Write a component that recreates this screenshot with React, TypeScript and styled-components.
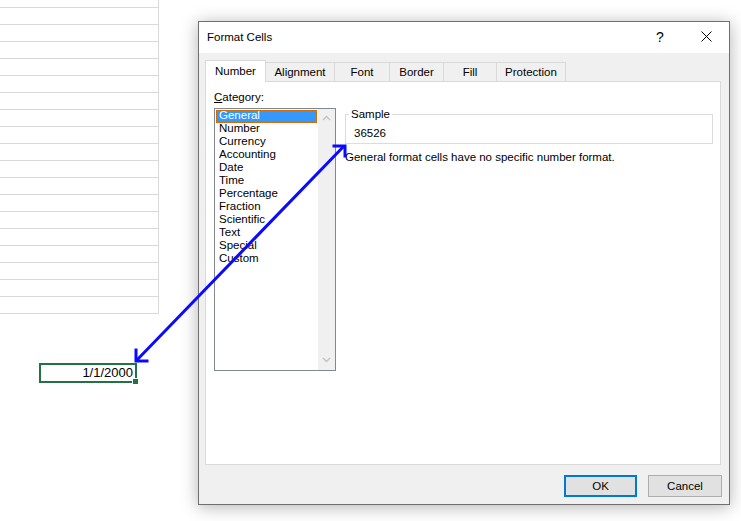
import styled, { createGlobalStyle } from "styled-components";

const GlobalStyle = createGlobalStyle`
    body {
        margin: 0;
        background: #ffffff;
        font-family: "Liberation Sans", Arial, sans-serif;
    }
`;

const Page = styled.div`
    position: relative;
    width: 741px;
    height: 521px;
    overflow: hidden;
    background: #ffffff;
`;

const Sheet = styled.div`
    width: 158px;
    border-right: 1px solid #d9d9d9;
`;

const SheetRow = styled.div<{ $first?: boolean }>`
    height: ${p => (p.$first ? "7px" : "16px")};
    border-bottom: 1px solid #d9d9d9;
`;

const CellRow = styled.div`
    margin-top: 49px;
    padding-left: 39px;
`;

const Cell = styled.div`
    position: relative;
    box-sizing: border-box;
    width: 98px;
    height: 20px;
    border: 2px solid #217346;
    padding-right: 2px;
    padding-bottom: 1px;
    display: flex;
    align-items: center;
    justify-content: flex-end;
    font-size: 13px;
    color: #000;
`;

const Handle = styled.div`
    position: absolute;
    right: -3px;
    bottom: -3px;
    width: 5px;
    height: 5px;
    background: #217346;
    border: 1px solid #ffffff;
    border-right: none;
    border-bottom: none;
`;

const Dialog = styled.div`
    position: absolute;
    left: 198px;
    top: 21px;
    box-sizing: border-box;
    width: 532px;
    height: 484px;
    border: 1px solid #6f6f6f;
    background: #f0f0f0;
    box-shadow: 0 2px 16px rgba(0, 0, 0, 0.3);
    display: flex;
    flex-direction: column;
    font-size: 11.5px;
    color: #000;
`;

const TitleBar = styled.div`
    height: 31px;
    box-sizing: border-box;
    background: #ffffff;
    display: flex;
    align-items: center;
    padding: 0 0 2px 8px;
`;

const TitleText = styled.div`
    flex: 1;
`;

const TitleButton = styled.div`
    width: 46px;
    height: 29px;
    display: flex;
    align-items: center;
    justify-content: center;
    font-size: 14px;
`;

const Body = styled.div`
    flex: 1;
    display: flex;
    flex-direction: column;
    padding: 7px 8px 0 6px;
`;

const Tabs = styled.div`
    display: flex;
    align-items: flex-end;
    height: 21px;
    position: relative;
    z-index: 1;
`;

const Tab = styled.div<{ $w: number; $active?: boolean }>`
    box-sizing: border-box;
    width: ${p => p.$w}px;
    height: ${p => (p.$active ? "22px" : "19px")};
    margin-right: -1px;
    margin-bottom: ${p => (p.$active ? "-1px" : "0")};
    border: 1px solid #d9d9d9;
    border-bottom: none;
    background: ${p => (p.$active ? "#ffffff" : "#f0f0f0")};
    display: flex;
    align-items: center;
    justify-content: center;
    padding-bottom: ${p => (p.$active ? "2px" : "0")};
    position: relative;
    z-index: ${p => (p.$active ? 2 : 1)};
`;

const Panel = styled.div`
    box-sizing: border-box;
    height: 384px;
    border: 1px solid #d9d9d9;
    background: #ffffff;
    display: flex;
    gap: 9px;
    padding: 8px 7px 0 8px;
`;

const LeftCol = styled.div`
    display: flex;
    flex-direction: column;
    width: 122px;
`;

const Label = styled.div`
    line-height: 15px;
    margin-bottom: 3px;
`;

const ListBox = styled.div`
    box-sizing: border-box;
    height: 263px;
    border: 1px solid #828790;
    display: flex;
`;

const Items = styled.div`
    flex: 1;
    padding: 1px 1px 0 1px;
`;

const Item = styled.div<{ $selected?: boolean }>`
    box-sizing: border-box;
    height: 13px;
    line-height: 8px;
    padding-left: 2px;
    background: ${p => (p.$selected ? "#3399ff" : "transparent")};
    color: ${p => (p.$selected ? "#ffffff" : "#000000")};
    border: 1px ${p => (p.$selected ? "dotted #cc6600" : "solid transparent")};
`;

const ScrollBar = styled.div`
    width: 17px;
    background: #f0f0f0;
    display: flex;
    flex-direction: column;
    justify-content: space-between;
    align-items: center;
    padding: 6px 0 7px;
`;

const RightCol = styled.div`
    flex: 1;
    display: flex;
    flex-direction: column;
    padding-top: 17px;
`;

const GroupBox = styled.fieldset`
    margin: 0;
    min-width: 0;
    border: 1px solid #dcdcdc;
    padding: 5px 8px 3px;
`;

const Legend = styled.legend`
    padding: 0 2px;
    margin-left: -5px;
    line-height: 14px;
`;

const SampleValue = styled.div`
    line-height: 14px;
`;

const Description = styled.div`
    margin-top: 6px;
    line-height: 14px;
`;

const ButtonRow = styled.div`
    display: flex;
    justify-content: flex-end;
    gap: 11px;
    margin-top: 10px;
    margin-right: -1px;
`;

const Button = styled.div<{ $primary?: boolean }>`
    box-sizing: border-box;
    width: ${p => (p.$primary ? "73px" : "74px")};
    height: 22px;
    background: #e1e1e1;
    border: ${p => (p.$primary ? "2px solid #0078d7" : "1px solid #adadad")};
    display: flex;
    align-items: center;
    justify-content: center;
`;

const Overlay = styled.svg`
    position: absolute;
    left: 0;
    top: 0;
    pointer-events: none;
    z-index: 5;
`;

const categories = [
    "General", "Number", "Currency", "Accounting", "Date", "Time",
    "Percentage", "Fraction", "Scientific", "Text", "Special", "Custom",
];

const tabs = [
    { name: "Number", w: 61 },
    { name: "Alignment", w: 70 },
    { name: "Font", w: 56 },
    { name: "Border", w: 55 },
    { name: "Fill", w: 54 },
    { name: "Protection", w: 70 },
];

function Chevron({ up }: { up?: boolean }) {
    return (
        <svg width="9" height="6" viewBox="0 0 9 6">
            <path
                d={up ? "M1 5 L4.5 1.5 L8 5" : "M1 1 L4.5 4.5 L8 1"}
                fill="none"
                stroke="#c2c2c2"
                strokeWidth="1.4"
            />
        </svg>
    );
}

export default function App() {
    return (
        <>
            <GlobalStyle />
            <Page>
                <Sheet>
                    <SheetRow $first />
                    {Array.from({ length: 18 }).map((_, i) => (
                        <SheetRow key={i} />
                    ))}
                </Sheet>
                <CellRow>
                    <Cell>
                        1/1/2000
                        <Handle />
                    </Cell>
                </CellRow>

                <Dialog>
                    <TitleBar>
                        <TitleText>Format Cells</TitleText>
                        <TitleButton>?</TitleButton>
                        <TitleButton>
                            <svg width="11" height="11" viewBox="0 0 11 11">
                                <path d="M0.5 0.5 L10.5 10.5 M10.5 0.5 L0.5 10.5" stroke="#000" strokeWidth="1" />
                            </svg>
                        </TitleButton>
                    </TitleBar>
                    <Body>
                        <Tabs>
                            {tabs.map(t => (
                                <Tab key={t.name} $w={t.w} $active={t.name === "Number"}>
                                    {t.name}
                                </Tab>
                            ))}
                        </Tabs>
                        <Panel>
                            <LeftCol>
                                <Label><u>C</u>ategory:</Label>
                                <ListBox>
                                    <Items>
                                        {categories.map(c => (
                                            <Item key={c} $selected={c === "General"}>{c}</Item>
                                        ))}
                                    </Items>
                                    <ScrollBar>
                                        <Chevron up />
                                        <Chevron />
                                    </ScrollBar>
                                </ListBox>
                            </LeftCol>
                            <RightCol>
                                <GroupBox>
                                    <Legend>Sample</Legend>
                                    <SampleValue>36526</SampleValue>
                                </GroupBox>
                                <Description>General format cells have no specific number format.</Description>
                            </RightCol>
                        </Panel>
                        <ButtonRow>
                            <Button $primary>OK</Button>
                            <Button>Cancel</Button>
                        </ButtonRow>
                    </Body>
                </Dialog>

                <Overlay width="741" height="521" viewBox="0 0 741 521">
                    <g fill="none" stroke="#0a0aff" strokeWidth="3" strokeLinecap="square">
                        <line x1="137" y1="360" x2="343" y2="147" />
                        <polyline points="136,350 136,361 147,361" />
                        <polyline points="334,146 345,146 345,156" />
                    </g>
                </Overlay>
            </Page>
        </>
    );
}
